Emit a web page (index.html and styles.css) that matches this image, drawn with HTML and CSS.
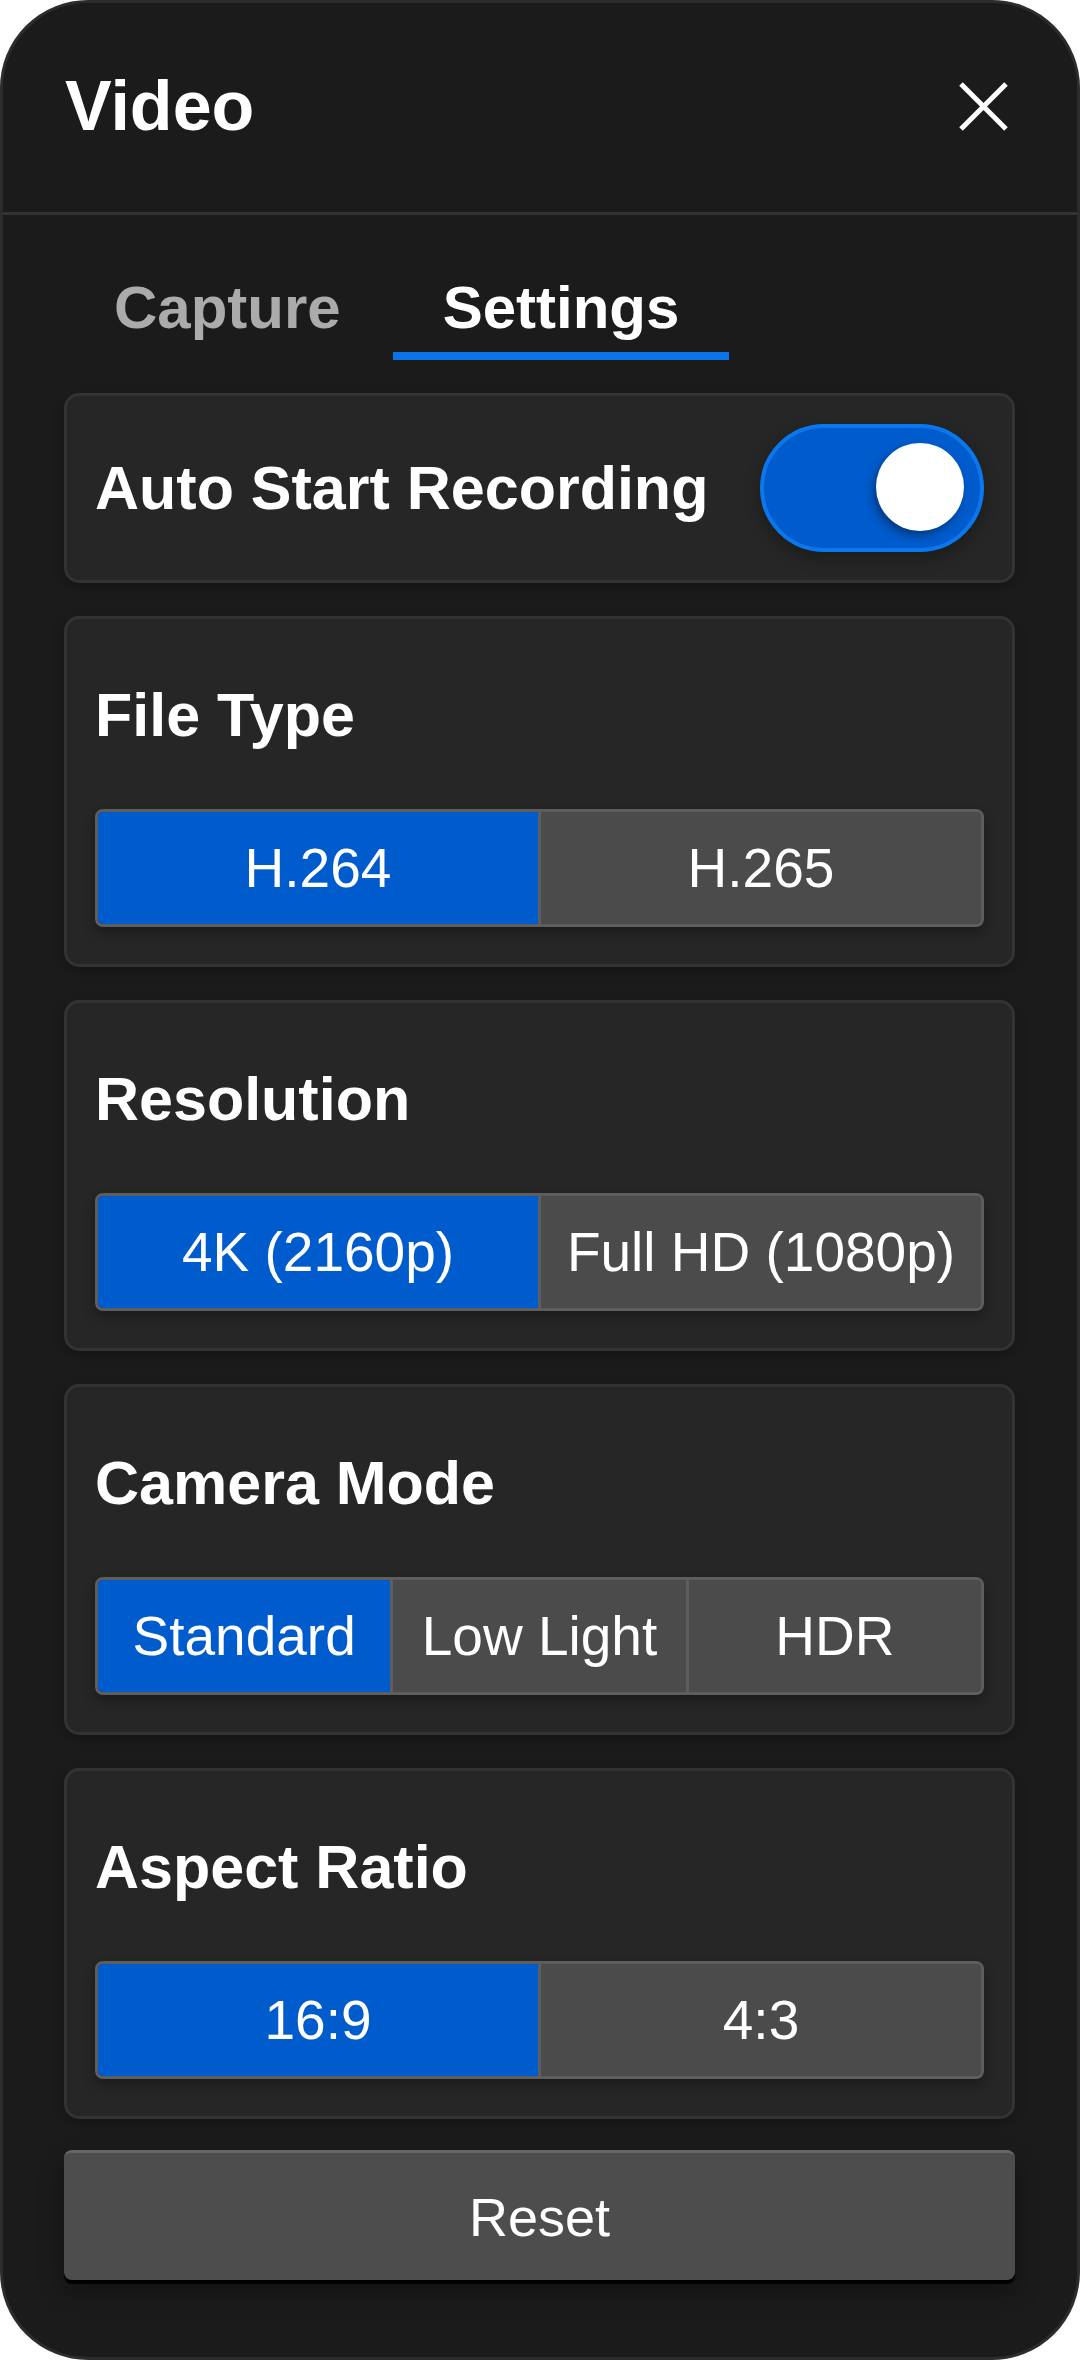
FILE: index.html
```html
<!DOCTYPE html>
<html lang="en">
<head>
<meta charset="utf-8">
<title>Video</title>
<link rel="stylesheet" href="styles.css">
</head>
<body>
<div class="panel">
  <header class="header">
    <h1 class="title">Video</h1>
    <button class="close" aria-label="Close">
      <svg width="51" height="51" viewBox="0 0 51 51"><path d="M3 3 L48 48 M48 3 L3 48" stroke="#fff" stroke-width="5" fill="none"/></svg>
    </button>
  </header>
  <nav class="tabs">
    <div class="tab">Capture</div>
    <div class="tab active">Settings</div>
  </nav>
  <main class="content">
    <section class="card row">
      <span class="label">Auto Start Recording</span>
      <div class="toggle"><div class="knob"></div></div>
    </section>
    <section class="card">
      <h2 class="heading">File Type</h2>
      <div class="seg">
        <div class="opt on">H.264</div>
        <div class="opt">H.265</div>
      </div>
    </section>
    <section class="card">
      <h2 class="heading">Resolution</h2>
      <div class="seg">
        <div class="opt on">4K (2160p)</div>
        <div class="opt">Full HD (1080p)</div>
      </div>
    </section>
    <section class="card">
      <h2 class="heading">Camera Mode</h2>
      <div class="seg">
        <div class="opt on">Standard</div>
        <div class="opt">Low Light</div>
        <div class="opt">HDR</div>
      </div>
    </section>
    <section class="card">
      <h2 class="heading">Aspect Ratio</h2>
      <div class="seg">
        <div class="opt on">16:9</div>
        <div class="opt">4:3</div>
      </div>
    </section>
    <button class="reset">Reset</button>
  </main>
</div>
</body>
</html>
```
FILE: styles.css
```css
* { box-sizing: border-box; }
html, body { margin: 0; padding: 0; background: #ffffff; }
body { font-family: "Liberation Sans", Arial, sans-serif; color: #fff; }

.panel {
  width: 1080px;
  height: 2360px;
  background: #1b1b1b;
  border: 3px solid #2c2c2c;
  border-radius: 88px;
  overflow: hidden;
}

.header {
  display: flex;
  align-items: center;
  justify-content: space-between;
  padding: 62px 68px 64px 62px;
  border-bottom: 3px solid #333333;
}
.title {
  margin: 0;
  font-size: 70px;
  line-height: 83px;
  font-weight: 700;
}
.close {
  background: none;
  border: 0;
  padding: 0;
  width: 51px;
  height: 51px;
  display: flex;
}

.tabs {
  display: flex;
  gap: 2px;
  margin: 58px 0 0 61px;
}
.tab {
  font-size: 60px;
  line-height: 69px;
  font-weight: 700;
  color: #ababab;
  padding: 0 50px 10px;
  border-bottom: 8px solid transparent;
}
.tab.active {
  color: #fff;
  border-bottom-color: #0a74e8;
}

.content {
  margin: 33px 62px 0 61px;
  display: flex;
  flex-direction: column;
  gap: 33px;
}

.card {
  background: #262626;
  border: 3px solid #333333;
  border-radius: 15px;
  padding: 28px 28px 37px;
  box-shadow: 0 4px 12px rgba(0,0,0,0.25);
}
.card.row {
  display: flex;
  align-items: center;
  justify-content: space-between;
  padding: 28px 28px 28px 28px;
}
.label {
  font-size: 61px;
  font-weight: 700;
  line-height: 69px;
}
.toggle {
  position: relative;
  width: 224px;
  height: 128px;
  border-radius: 64px;
  background: #005bcc;
  border: 4px solid #0a78ec;
  box-shadow: 0 6px 16px rgba(0,0,0,0.3);
}
.knob {
  position: absolute;
  right: 16px;
  top: 15px;
  width: 88px;
  height: 88px;
  border-radius: 50%;
  background: #fff;
  box-shadow: -3px 5px 8px rgba(0,0,0,0.35);
}

.heading {
  margin: 34px 0 59px;
  font-size: 61px;
  line-height: 69px;
  font-weight: 700;
}

.seg {
  display: flex;
  height: 118px;
  border: 3px solid #5e5e5e;
  border-radius: 8px;
  overflow: hidden;
  box-shadow: 0 6px 12px rgba(0,0,0,0.3);
}
.opt {
  flex: 1 1 0;
  display: flex;
  align-items: center;
  justify-content: center;
  background: #4b4b4b;
  font-size: 55px;
  color: #fff;
  white-space: nowrap;
}
.opt + .opt { border-left: 3px solid #5e5e5e; }
.opt.on { background: #005bcc; }

.reset {
  margin-top: -2px;
  height: 130px;
  background: #4d4d4d;
  border: 0;
  border-top: 3px solid #666666;
  border-radius: 8px;
  color: #fff;
  font-family: "Liberation Sans", Arial, sans-serif;
  font-size: 54px;
  box-shadow: 0 4px 0 #000, 0 12px 24px rgba(0,0,0,0.35);
}
```
